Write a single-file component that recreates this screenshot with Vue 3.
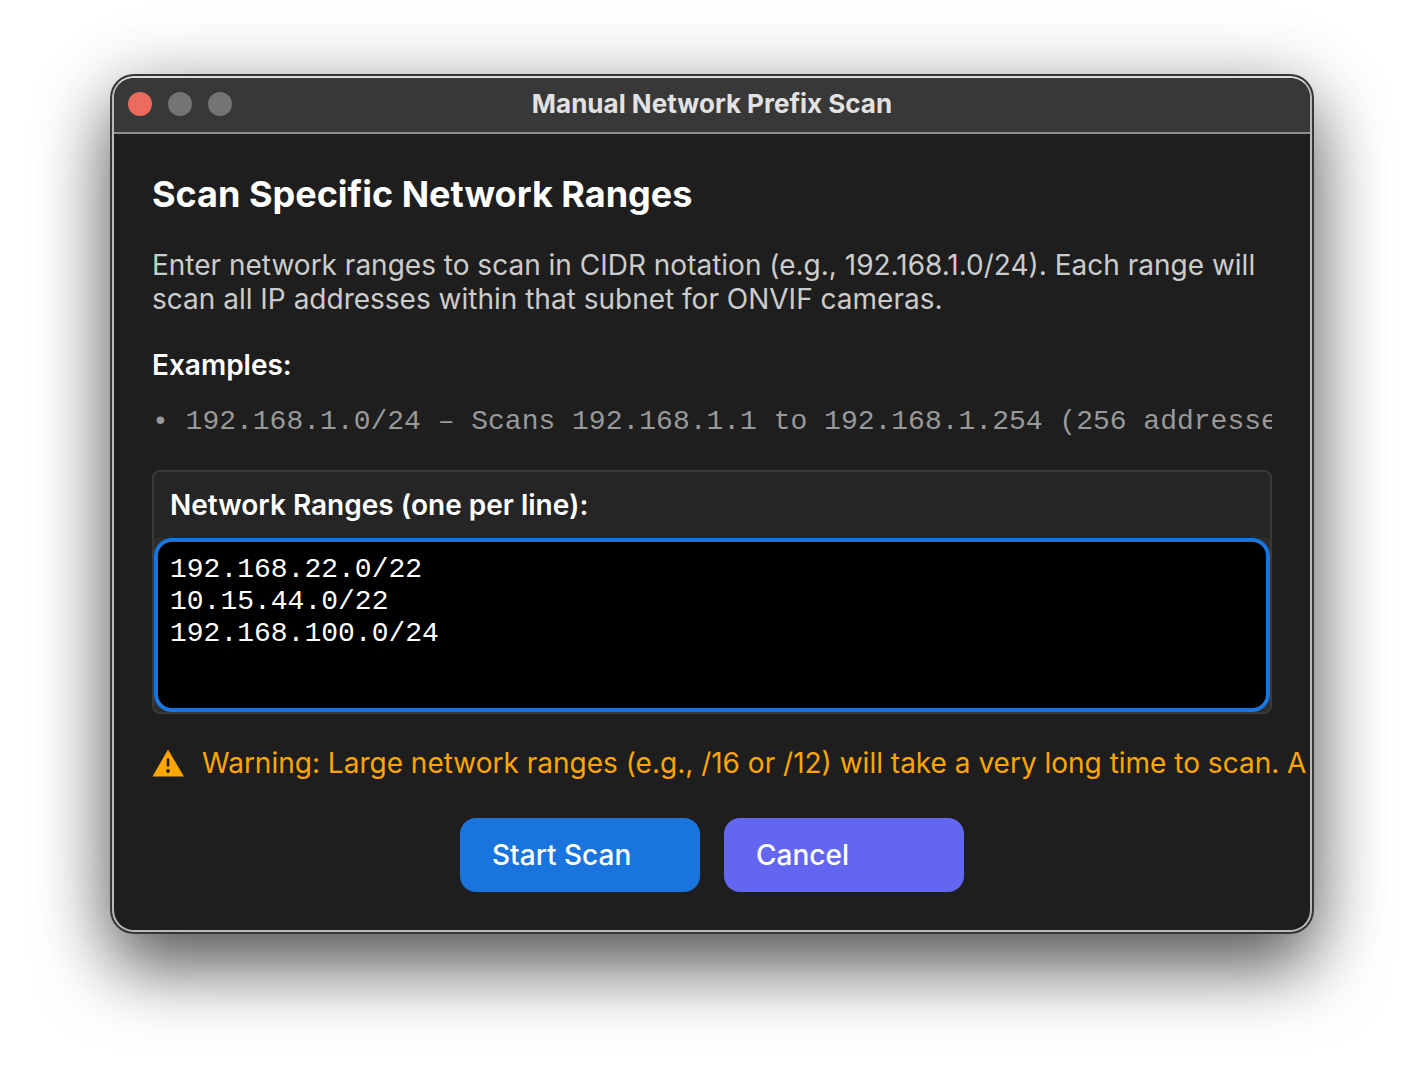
<script setup>
import { ref } from 'vue'

const ranges = ref('192.168.22.0/22\n10.15.44.0/22\n192.168.100.0/24')
</script>

<template>
  <main class="desktop">
    <section class="window" aria-labelledby="window-title">
      <header class="titlebar">
        <div class="lights">
          <button class="light close" type="button" aria-label="Close"></button>
          <button class="light" type="button" aria-label="Minimize" disabled></button>
          <button class="light" type="button" aria-label="Zoom" disabled></button>
        </div>
        <div id="window-title" class="title">Manual Network Prefix Scan</div>
      </header>

      <form class="content" @submit.prevent>
        <h1>Scan Specific Network Ranges</h1>
        <p class="intro">
          Enter network ranges to scan in CIDR notation (e.g., 192.168.1.0/24). Each range will
          scan all IP addresses within that subnet for ONVIF cameras.
        </p>
        <h2>Examples:</h2>
        <p class="example">• 192.168.1.0/24 – Scans 192.168.1.1 to 192.168.1.254 (256 addresses)</p>

        <div class="panel">
          <label for="ranges">Network Ranges (one per line):</label>
          <div class="field">
            <textarea id="ranges" v-model="ranges" spellcheck="false"></textarea>
          </div>
        </div>

        <div class="warning">
          <svg width="32" height="28" viewBox="0 0 32 28" aria-hidden="true">
            <path d="M16 0.5 32 27.5H0.5Z" fill="#ffa500" />
            <path d="M14.7 9.5h2.6v8h-2.6z" fill="#1e1e1e" />
            <circle cx="16" cy="22" r="1.9" fill="#1e1e1e" />
          </svg>
          <span>Warning: Large network ranges (e.g., /16 or /12) will take a very long time to scan. A</span>
        </div>

        <div class="actions">
          <button class="action start" type="submit">Start Scan</button>
          <button class="action cancel" type="button">Cancel</button>
        </div>
      </form>
    </section>
  </main>
</template>

<style>
body {
  margin: 0;
  background: #fff;
}
</style>

<style scoped>
.desktop {
  box-sizing: border-box;
  min-height: 100vh;
  padding: 76px 112px 148px;
  overflow: hidden;
  font-family: Inter, "Liberation Sans", sans-serif;
}

.window {
  border: 2px solid #b9b9b9;
  border-top-color: #dcdcdc;
  border-radius: 22px;
  background: #1e1e1e;
  overflow: hidden;
  box-shadow: 0 0 0 2px #363636, 0 36px 72px rgba(0, 0, 0, 0.6), 0 4px 80px rgba(0, 0, 0, 0.2);
}

.titlebar {
  display: grid;
  grid-template-columns: 1fr auto 1fr;
  align-items: center;
  box-sizing: border-box;
  height: 56px;
  padding: 0 14px 2px;
  border-bottom: 2px solid #8f8f8f;
  background: #383838;
}

.lights {
  display: flex;
  gap: 16px;
}

.light {
  width: 24px;
  height: 24px;
  padding: 0;
  border: 0;
  border-radius: 50%;
  background: #747474;
}

.close {
  background: #ed6a5e;
}

.title {
  color: #e2e2e2;
  font-size: 26px;
  font-weight: 700;
  line-height: 32px;
}

.content {
  padding: 38px;
}

h1,
h2,
p {
  margin: 0;
}

h1 {
  color: #fff;
  font-size: 36px;
  font-weight: 700;
  line-height: 44px;
}

.intro {
  margin-top: 32px;
  color: #ccc;
  font-size: 28px;
  line-height: 34px;
}

h2,
label {
  color: #fff;
  font-size: 28px;
  font-weight: 600;
  line-height: 34px;
}

h2 {
  margin-top: 32px;
}

.example {
  margin-top: 26px;
  overflow: hidden;
  color: #999;
  font-family: "Liberation Mono", monospace;
  font-size: 28px;
  line-height: 28px;
  white-space: nowrap;
}

.panel {
  margin-top: 34px;
  border: 2px solid #3a3a3a;
  border-radius: 8px;
  background: #252525;
}

.panel label {
  display: block;
  padding: 16px;
}

.field {
  border-radius: 0 0 6px 6px;
  background: #2d2d2d;
}

textarea {
  display: block;
  box-sizing: border-box;
  width: 100%;
  height: 174px;
  padding: 12px;
  border: 4px solid #1a74de;
  border-radius: 18px;
  outline: 0;
  background: #000;
  color: #fff;
  font-family: "Liberation Mono", monospace;
  font-size: 28px;
  line-height: 32px;
  resize: none;
}

.warning {
  display: flex;
  align-items: center;
  gap: 18px;
  margin: 32px -38px 0 0;
  color: #ffa500;
  font-size: 28px;
  line-height: 34px;
  white-space: nowrap;
}

.warning svg {
  flex: none;
}

.actions {
  display: flex;
  justify-content: center;
  gap: 24px;
  margin-top: 38px;
}

.action {
  width: 240px;
  height: 74px;
  padding: 0 32px;
  border: 0;
  border-radius: 16px;
  color: #fff;
  font-family: inherit;
  font-size: 28px;
  font-weight: 500;
  text-align: left;
}

.start {
  background: #1a74de;
}

.cancel {
  background: #6366f1;
}
</style>
